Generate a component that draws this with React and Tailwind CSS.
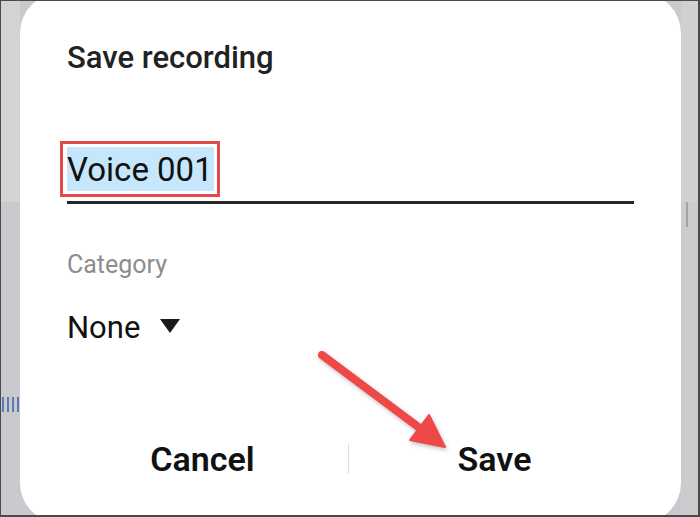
import React from 'react'

const font = { fontFamily: 'Roboto, "Noto Sans", sans-serif' }

function Arrow() {
  // annotation arrow drawn over the dialog
  return (
    <svg
      className="absolute left-0 top-0 pointer-events-none drop-shadow-[1px_2px_2px_rgba(0,0,0,0.25)]"
      width="700"
      height="517"
      viewBox="0 0 700 517"
    >
      <line x1="321" y1="354" x2="420" y2="428" stroke="#ef4848" strokeWidth="8" strokeLinecap="round" />
      <polygon points="444,446 409,439 428,414" fill="#ef4848" stroke="#ef4848" strokeWidth="2" strokeLinejoin="round" />
    </svg>
  )
}

export default function App() {
  return (
    <div className="relative w-[700px] h-[517px] overflow-hidden border-t border-l border-r-2 border-b-2 border-[#4a4a4a] flex items-start bg-[#c9cacd]" style={font}>
      <div className="w-[19px] h-full shrink-0 flex flex-col">
        <div className="h-[201px] bg-[#d3d3d3]" />
        <div className="flex-1 bg-[#c9cacd] pt-[195px]">
          <div className="flex gap-[3px] pl-[1px] h-[15px]">
            <div className="w-[2px] h-full bg-[#5b7cb2]" />
            <div className="w-[2px] h-full bg-[#5b7cb2]" />
            <div className="w-[2px] h-full bg-[#5b7cb2]" />
            <div className="w-[2px] h-full bg-[#5b7cb2]" />
          </div>
        </div>
      </div>

      <div className="w-[661px] h-[530px] -mt-[8px] shrink-0 bg-white rounded-[40px] flex flex-col pt-[47px] pl-[47px] pr-[47px]">
        <h1 className="text-[31px] leading-[36px] font-medium text-[#222222]">Save recording</h1>

        <div className="mt-[65px] border-b-[3px] border-[#262626] pb-[4px]">
          <div className="-ml-[7px] inline-block border-[3px] border-[#e24b4b] pl-[4px] pr-[3px] py-[3px]">
            <span className="block bg-[#c6e6fb] h-[44px] leading-[46px] text-[33px] text-[#111111] pr-[1px]">Voice 001</span>
          </div>
        </div>

        <p className="mt-[46px] text-[25px] leading-[30px] text-[#8d8d8d]">Category</p>

        <div className="mt-[30px] flex items-center h-[36px]">
          <span className="text-[31px] leading-[36px] text-[#111111]">None</span>
          <svg className="ml-[20px] mt-[-4px]" width="20" height="14" viewBox="0 0 20 14">
            <polygon points="0,0 20,0 10,14" fill="#1a1a1a" />
          </svg>
        </div>

        <div className="mt-auto mb-[44px] -ml-[10px] -mr-[6px] flex items-center">
          <button className="flex-1 text-[34px] leading-[40px] font-semibold text-[#111111]">Cancel</button>
          <div className="w-px h-[30px] bg-[#dddddd]" />
          <button className="flex-1 text-[34px] leading-[40px] font-semibold text-[#111111]">Save</button>
        </div>
      </div>

      <div className="w-[18px] h-full shrink-0 bg-[#cbccce] flex flex-col">
        <div className="h-[201px] bg-[#d0d0d0]" />
        <div className="w-[2px] h-[25px] bg-[#a3a3a5] ml-[5px]" />
      </div>

      <Arrow />
    </div>
  )
}
